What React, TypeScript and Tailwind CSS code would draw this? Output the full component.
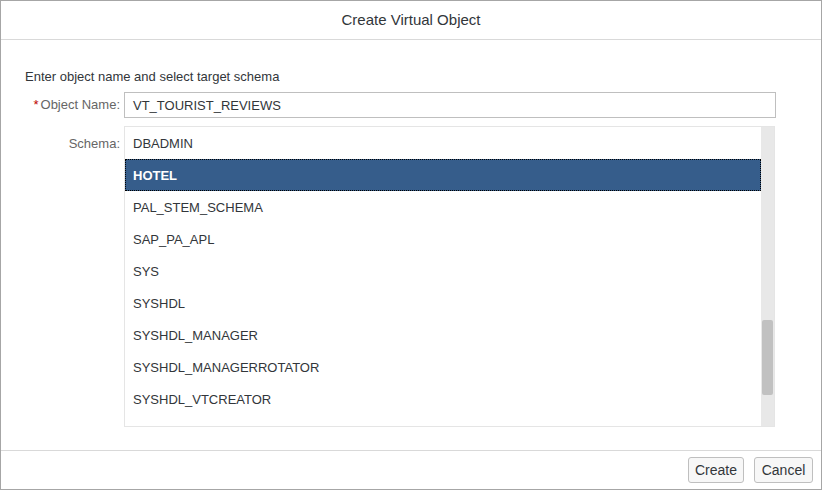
const schemas = [
  "DBADMIN",
  "HOTEL",
  "PAL_STEM_SCHEMA",
  "SAP_PA_APL",
  "SYS",
  "SYSHDL",
  "SYSHDL_MANAGER",
  "SYSHDL_MANAGERROTATOR",
  "SYSHDL_VTCREATOR",
]

export default function App() {
  const selected = "HOTEL"

  return (
    <div
      className="flex h-[490px] w-[822px] flex-col border border-[#a6a6a6] bg-white text-[#32363a]"
      style={{ fontFamily: '"Liberation Sans", Arial, sans-serif' }}
    >
      <div className="flex h-[39px] shrink-0 items-center justify-center border-b border-[#d9d9d9] text-[15px]">
        Create Virtual Object
      </div>

      <div className="flex-1 pt-[28px]">
        <div className="pl-[24px] text-[13px] leading-[18px]">Enter object name and select target schema</div>

        <div className="mt-[6px] flex items-center gap-[4px]">
          <label className="w-[119px] text-right text-[13px] text-[#666]">
            <span className="mr-[2px] text-[#bb0000]">*</span>Object Name:
          </label>
          <div className="flex h-[26px] w-[652px] items-center border border-[#bfbfbf] px-[8px] pt-px text-[13px]">
            VT_TOURIST_REVIEWS
          </div>
        </div>

        <div className="mt-[8px] flex items-start gap-[4px]">
          <label className="w-[119px] pt-[9px] text-right text-[13px] leading-[18px] text-[#666]">Schema:</label>
          <div className="flex h-[301px] w-[651px] border border-[#e5e5e5]">
            <ul className="flex-1 overflow-hidden">
              {schemas.map((s) =>
                s === selected ? (
                  <li
                    key={s}
                    className="flex h-[32px] items-center border border-dotted border-black bg-[#365d8b] pl-[7px] pt-px text-[13px] font-bold text-white"
                  >
                    {s}
                  </li>
                ) : (
                  <li key={s} className="flex h-[32px] items-center pl-[8px] pt-px text-[13px]">
                    {s}
                  </li>
                ),
              )}
            </ul>
            <div className="flex w-[13px] flex-col bg-[#e8e8e8]">
              <div className="mx-px mt-[193px] h-[75px] rounded-[2px] bg-[#c1c1c1]" />
            </div>
          </div>
        </div>
      </div>

      <div className="flex h-[39px] shrink-0 items-center justify-end gap-[10px] border-t border-[#d9d9d9] pr-[8px]">
        <button className="h-[26px] w-[56px] rounded-[3px] border border-[#bfbfbf] bg-[#f7f7f7] text-[14px] text-[#32363a]">
          Create
        </button>
        <button className="h-[26px] w-[59px] rounded-[3px] border border-[#bfbfbf] bg-[#f7f7f7] text-[14px] text-[#32363a]">
          Cancel
        </button>
      </div>
    </div>
  )
}
